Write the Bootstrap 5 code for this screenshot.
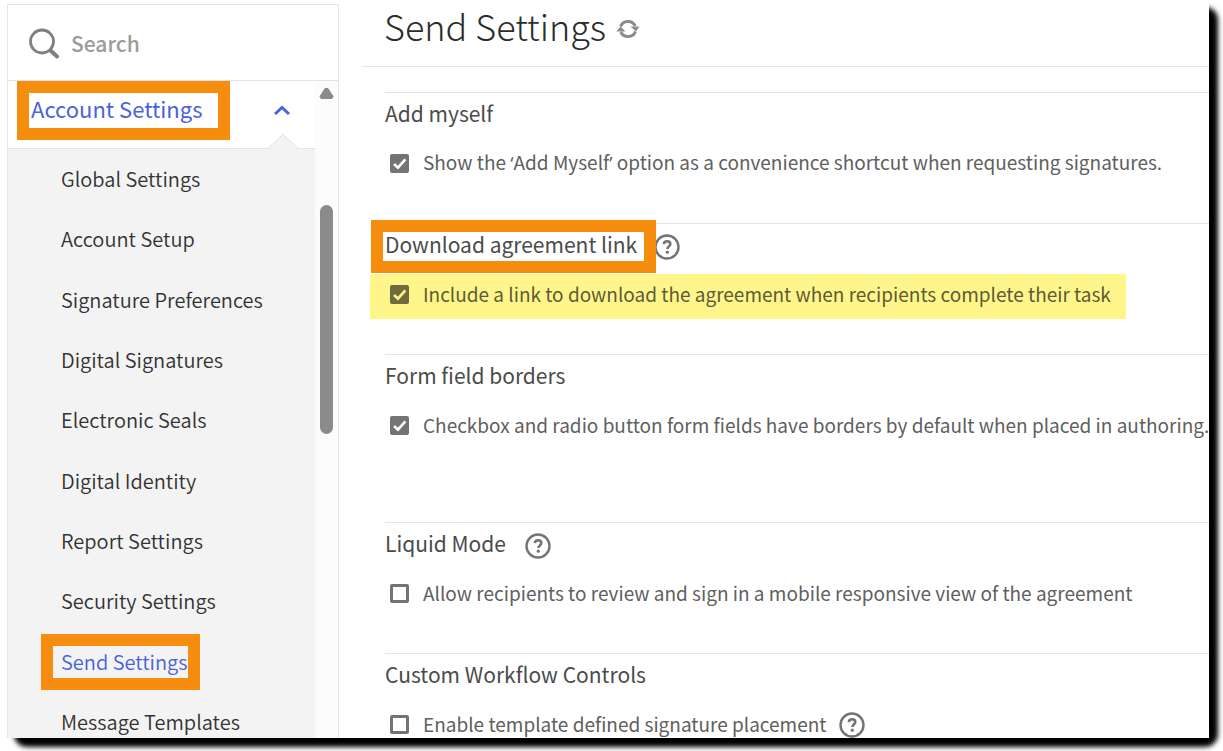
<!DOCTYPE html>
<html lang="en">
<head>
<meta charset="utf-8">
<meta name="viewport" content="width=device-width, initial-scale=1">
<title>Send Settings</title>
<link href="https://cdn.jsdelivr.net/npm/bootstrap@5.3.0/dist/css/bootstrap.min.css" rel="stylesheet">
<style>
  :root { --ink: #4b4b4b; --accent: #4a63d8; --callout: #f68d0e; --rule: #e4e4e4; --glyph: #747474; }
  body { font-family: "Noto Sans CJK SC", "Open Sans", sans-serif; color: var(--ink); background: #fff; overflow: hidden; }
  .quote { font-family: "Open Sans", sans-serif; }
  .page { height: 100vh; padding: 0 14px 13px 7px; }
  .window { position: relative; z-index: 0; background: #fff; }
  .window::before { content: ""; position: absolute; inset: 0; z-index: -2; border-radius: 12px; box-shadow: 8px 8px 5px 1px #000; }
  .window::after { content: ""; position: absolute; inset: 0; z-index: -1; background: #fff; }

  .sidebar { width: 332px; margin-top: 4px; border: 1px solid var(--rule); border-bottom: 0; }
  .search { height: 76px; padding-left: 20px; gap: 11px; border-bottom: 1px solid var(--rule); }
  .search input { font-size: 21px; line-height: 28px; color: #4b4b4b; font-weight: 500; outline: 0; }
  .search input::placeholder { color: #9b9b9b; opacity: 1; }
  .group { height: 68px; padding: 0 24px 8px 21px; font-size: 22px; line-height: 31px; color: var(--accent); border-bottom: 1px solid var(--rule); }
  .notch { position: absolute; right: 16px; bottom: -1px; }
  .callout-box { position: relative; z-index: 1; outline: 12px solid var(--callout); }
  .group .callout-box { padding: 0 16px 4px 2px; }
  .menu { background: #f3f3f3; margin-bottom: -14px; }
  .menu a { font-size: 20px; line-height: 32px; font-weight: 350; color: #333; padding: 0 8px; margin-left: 45px; text-decoration: none; }
  .menu a.current { color: var(--accent); padding-right: 0; }
  .track { width: 23px; background: #fcfcfc; padding-top: 6px; }
  .thumb { width: 13px; height: 229px; border-radius: 7px; background: #8b8b8b; margin-top: 106px; }

  .content-pane { padding-left: 23px; }
  .title-bar { height: 67px; padding: 0 0 16px 22px; gap: 10px; border-bottom: 1px solid var(--rule); margin-bottom: 25px; }
  .title-bar h1 { font-size: 36px; line-height: 50px; font-weight: 300; color: #2c2c2c; }
  .title-bar .icon-btn { padding-top: 8px; }
  .setting { margin-left: 23px; min-height: 131px; padding-top: 8px; border-top: 1px solid var(--rule); }
  .setting.tall { min-height: 168px; }
  .setting h2 { font-size: 21px; line-height: 25px; font-weight: 400; margin: 0; padding-bottom: 4px; }
  .setting .head { gap: 19px; margin-bottom: 13px; }
  .setting .head.tight { gap: 10px; }
  .setting .head .callout-box { padding: 0 7px 4px 2px; margin-left: -2px; }
  .option { height: 45px; padding: 0 15px 4px 20px; margin-left: -15px; gap: 14px; font-size: 19px; line-height: 26px; color: #606060; width: max-content; }
  .option span { padding-bottom: 2px; }
  .option .quote { padding: 0; }
  .option .form-check-input { width: 19px; height: 19px; margin: 0; border: 3px solid var(--glyph); border-radius: 2px; box-shadow: none; flex: none; }
  .option .form-check-input:checked { background-color: var(--glyph); background-size: 18px; background-position: center;
    background-image: url("data:image/svg+xml,%3Csvg xmlns='http://www.w3.org/2000/svg' viewBox='0 0 18 18'%3E%3Cpath fill='none' stroke='%23fff' stroke-width='2.6' d='M3.5 9.2l3.8 3.6 7.2-8'/%3E%3C/svg%3E"); }
  .option.marked { background: #fef68b; color: #5f5b36; }
  .option.marked .form-check-input:checked { border-color: #706b3f; background-color: #706b3f;
    background-image: url("data:image/svg+xml,%3Csvg xmlns='http://www.w3.org/2000/svg' viewBox='0 0 18 18'%3E%3Cpath fill='none' stroke='%23fef68b' stroke-width='2.6' d='M3.5 9.2l3.8 3.6 7.2-8'/%3E%3C/svg%3E"); }
  .icon-btn { line-height: 0; color: var(--glyph); }
</style>
</head>
<body>
<svg class="d-none">
  <symbol id="help" viewBox="0 0 26 26">
    <circle cx="13" cy="13" r="11.500" fill="none" stroke="currentColor" stroke-width="2.400"/>
    <path d="M9.800 10.200c.2-2 1.400-3 3.300-3s3.200 1.100 3.200 2.800c0 2.500-2.900 2.600-2.900 5" fill="none" stroke="currentColor" stroke-width="2.600"/>
    <circle cx="13.300" cy="18.200" r="1.600" fill="currentColor"/>
  </symbol>
</svg>
<div class="page">
  <div class="window h-100">
    <div class="d-flex h-100 overflow-hidden">
      <aside class="sidebar d-flex flex-column flex-shrink-0">
        <label class="search d-flex align-items-center flex-shrink-0">
          <svg width="32" height="32" viewBox="0 0 32 32" fill="none" stroke="#7f7f7f"><circle cx="14" cy="14.500" r="11.500" stroke-width="2.800"/><path d="M22.500 23.500l6.500 6" stroke-width="4" stroke-linecap="round"/></svg>
          <input type="text" class="border-0 p-0 bg-transparent" placeholder="Search" aria-label="Search">
        </label>
        <div class="d-flex flex-fill overflow-hidden">
          <nav class="d-flex flex-column flex-fill">
            <div class="group position-relative d-flex align-items-center justify-content-between flex-shrink-0">
              <a href="#" class="callout-box text-decoration-none text-reset">Account Settings</a>
              <svg width="18" height="12" viewBox="0 0 18 12" fill="none" stroke="currentColor" stroke-width="3"><path d="M2 9l7-6.500L16 9"/></svg>
              <svg class="notch" width="32" height="16" viewBox="0 0 32 16"><path d="M1 16L16 1.500 31 16z" fill="#f3f3f3"/><path d="M1 15.500L16 1.500 31 15.500" fill="none" stroke="#dedede"/></svg>
            </div>
            <ul class="menu list-unstyled d-flex flex-column flex-fill">
              <li class="d-flex flex-fill align-items-center"><a href="#">Global Settings</a></li>
              <li class="d-flex flex-fill align-items-center"><a href="#">Account Setup</a></li>
              <li class="d-flex flex-fill align-items-center"><a href="#">Signature Preferences</a></li>
              <li class="d-flex flex-fill align-items-center"><a href="#">Digital Signatures</a></li>
              <li class="d-flex flex-fill align-items-center"><a href="#">Electronic Seals</a></li>
              <li class="d-flex flex-fill align-items-center"><a href="#">Digital Identity</a></li>
              <li class="d-flex flex-fill align-items-center"><a href="#">Report Settings</a></li>
              <li class="d-flex flex-fill align-items-center"><a href="#">Security Settings</a></li>
              <li class="d-flex flex-fill align-items-center"><a href="#" class="current callout-box">Send Settings</a></li>
              <li class="d-flex flex-fill align-items-center"><a href="#">Message Templates</a></li>
            </ul>
          </nav>
          <div class="track d-flex flex-column align-items-center">
            <svg width="15" height="12" viewBox="0 0 15 12"><path d="M6 1.500h3L14 9.500 13 11.500H2L1 9.500z" fill="#8b8b8b" stroke="#8b8b8b" stroke-linejoin="round"/></svg>
            <div class="thumb"></div>
          </div>
        </div>
      </aside>
      <main class="content-pane flex-fill overflow-hidden">
        <header class="title-bar d-flex align-items-center">
          <h1 class="m-0">Send Settings</h1>
          <button class="icon-btn btn px-0 pb-0 border-0" aria-label="Refresh">
            <svg width="24" height="22" viewBox="0 0 24 22" fill="none" stroke="#8c8c8c" stroke-width="3"><path d="M4.500 8.500a8 8 0 0 1 14.700-.5M19.500 13.500a8 8 0 0 1-14.700.5"/><path d="M14.500 8.500h9l-3.500 5zM.5 13.500h9L4.500 8.500z" fill="#8c8c8c" stroke="none"/></svg>
          </button>
        </header>
        <section class="setting">
          <div class="head d-flex align-items-center"><h2>Add myself</h2></div>
          <label class="option d-flex align-items-center"><input class="form-check-input" type="checkbox" checked><span>Show the <span class="quote">‘</span>Add Myself<span class="quote">’</span> option as a convenience shortcut when requesting signatures.</span></label>
        </section>
        <section class="setting">
          <div class="head tight d-flex align-items-center"><h2 class="callout-box bg-white">Download agreement link</h2>
            <button class="icon-btn btn p-0 border-0" aria-label="Help"><svg width="26" height="26"><use href="#help"/></svg></button></div>
          <label class="option marked d-flex align-items-center"><input class="form-check-input" type="checkbox" checked><span>Include a link to download the agreement when recipients complete their task</span></label>
        </section>
        <section class="setting tall">
          <div class="head d-flex align-items-center"><h2>Form field borders</h2></div>
          <label class="option d-flex align-items-center"><input class="form-check-input" type="checkbox" checked><span>Checkbox and radio button form fields have borders by default when placed in authoring.</span></label>
        </section>
        <section class="setting">
          <div class="head d-flex align-items-center"><h2>Liquid Mode</h2>
            <button class="icon-btn btn p-0 border-0" aria-label="Help"><svg width="26" height="26"><use href="#help"/></svg></button></div>
          <label class="option d-flex align-items-center"><input class="form-check-input" type="checkbox"><span>Allow recipients to review and sign in a mobile responsive view of the agreement</span></label>
        </section>
        <section class="setting">
          <div class="head d-flex align-items-center"><h2>Custom Workflow Controls</h2></div>
          <div class="d-flex">
            <label class="option d-flex align-items-center pe-2"><input class="form-check-input" type="checkbox"><span>Enable template defined signature placement</span></label>
            <button class="icon-btn btn py-0 px-1 pb-1 border-0" aria-label="Help"><svg width="26" height="26"><use href="#help"/></svg></button>
          </div>
        </section>
      </main>
    </div>
  </div>
</div>
<script src="https://cdn.jsdelivr.net/npm/bootstrap@5.3.0/dist/js/bootstrap.bundle.min.js"></script>
</body>
</html>
